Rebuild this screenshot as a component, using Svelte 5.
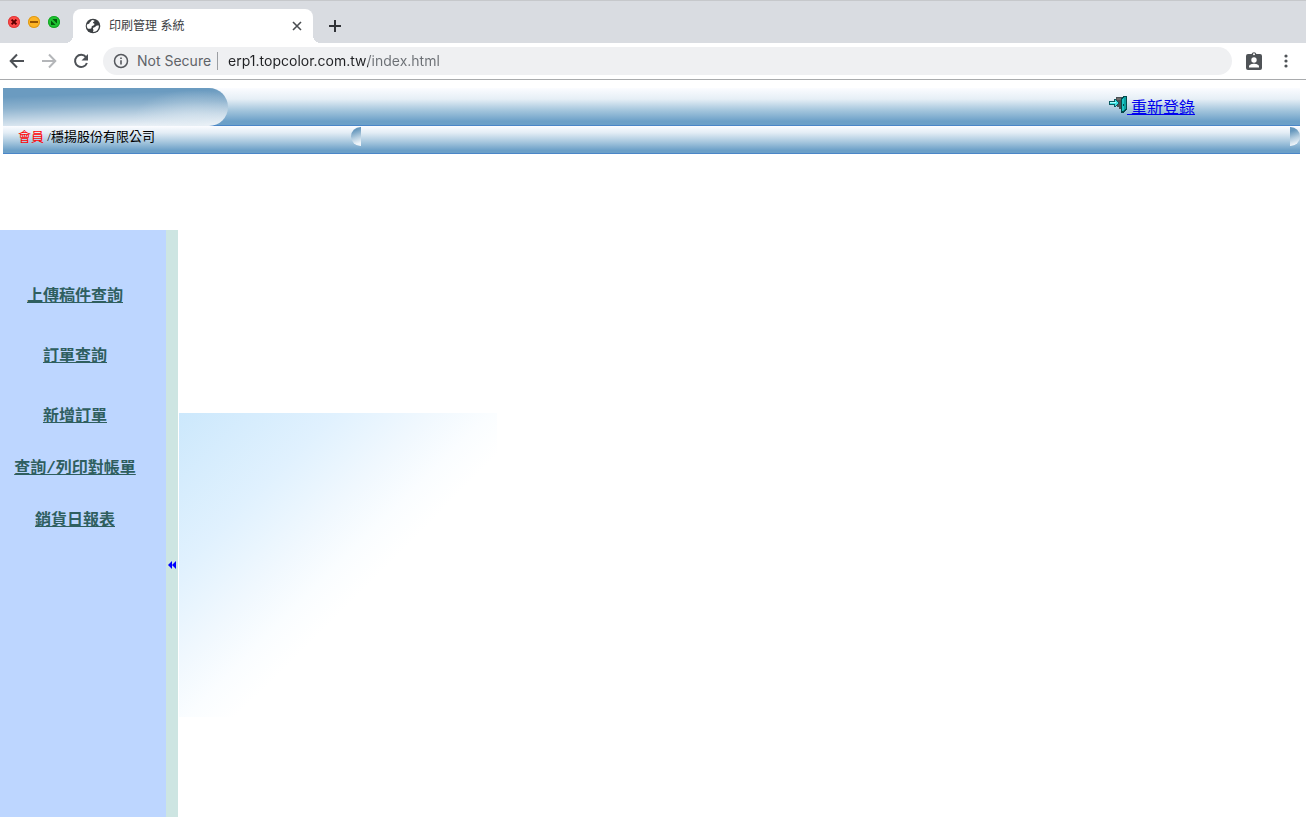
<script>
    let url = $state("erp1.topcolor.com.tw/index.html");

    const menu = [
        { label: "上傳稿件查詢", tall: true },
        { label: "訂單查詢", tall: true },
        { label: "新增訂單", tall: false },
        { label: "查詢/列印對帳單", tall: false },
        { label: "銷貨日報表", tall: false },
    ];
</script>

<div class="window">
    <div class="tabstrip">
        <div class="lights">
            <button class="light red" aria-label="Close window">
                <svg viewBox="0 0 12 12"><path d="M3.6 3.6l4.8 4.8M8.4 3.6L3.6 8.4" stroke="#5c0000" stroke-width="2" /></svg>
            </button>
            <button class="light yellow" aria-label="Minimize window">
                <svg viewBox="0 0 12 12"><path d="M2 6h8" stroke="#8a4a00" stroke-width="1.8" /></svg>
            </button>
            <button class="light green" aria-label="Zoom window">
                <svg viewBox="0 0 12 12"><path d="M3 4.4L7.6 9H3zM4.4 3H9v4.6z" fill="#045a0c" /></svg>
            </button>
        </div>
        <div class="tab">
            <svg class="globe" viewBox="0 0 16 16">
                <circle cx="8" cy="8" r="7.3" fill="#3c4043" />
                <path d="M7.2 1.9c-1.4.4-.9 1.6-2 2-1 .4-.4 1.5-1.4 1.9L2 6.6c-.5 1.5 0 3 .9 4.1 1 .3 2.8.2 3.4-.4.7-.8-.2-1.9.9-2.3 1.5-.4 2.3-.6 2.2-1.9 0-.9-1.4-.5-1.5-1.3 0-1.100 1.500-1 1.600-2.100-.7-.5-1.400-.8-2.300-.8z" fill="#fff" />
                <path d="M13.9 7.6c-1.1-.3-2.7-.3-3.2.7-.5 1.2-1.9.9-2.6 1.8-.5.9.5 1.4.3 2.3-.1.7-.5 1.1-.4 1.6 3.2.2 5.9-2.4 5.9-6.4z" fill="#fff" />
            </svg>
            <span class="title">印刷管理 系統</span>
            <button class="close" aria-label="Close tab">
                <svg viewBox="0 0 10 10"><path d="M1 1l8 8M9 1L1 9" stroke="#4a4d51" stroke-width="1.6" /></svg>
            </button>
        </div>
        <button class="new" aria-label="New tab">
            <svg viewBox="0 0 12 12"><path d="M6 0v12M0 6h12" stroke="#303236" stroke-width="2" /></svg>
        </button>
    </div>

    <div class="toolbar">
        <button class="tool" aria-label="Back">
            <svg viewBox="0 0 16 16"><path d="M15 8H2M8 1.5L1.7 8 8 14.5" fill="none" stroke="#4d5156" stroke-width="2" /></svg>
        </button>
        <button class="tool" aria-label="Forward">
            <svg viewBox="0 0 16 16"><path d="M1 8h13M8 1.5L14.3 8 8 14.5" fill="none" stroke="#b4b6b9" stroke-width="2" /></svg>
        </button>
        <button class="tool" aria-label="Reload">
            <svg viewBox="0 0 16 16">
                <path d="M13 4.2A6.1 6.1 0 1 0 13.9 10" fill="none" stroke="#4d5156" stroke-width="2" />
                <path d="M15 1v6.5H8.5z" fill="#4d5156" />
            </svg>
        </button>
        <div class="omnibox">
            <svg class="info" viewBox="0 0 16 16">
                <circle cx="8" cy="8" r="6.5" fill="none" stroke="#55585d" stroke-width="1.5" />
                <path d="M8 7.200v4.300M8 4.400v1.700" stroke="#55585d" stroke-width="1.6" />
            </svg>
            <label for="url">Not Secure</label>
            <input id="url" type="text" spellcheck="false" bind:value={url} />
        </div>
        <button class="tool profile" aria-label="Profile">
            <svg viewBox="0 0 16 20">
                <path d="M2 3h3.600a2.500 2.500 0 0 1 4.800 0H14q2 0 2 2v12q0 2-2 2H2q-2 0-2-2V5q0-2 2-2z" fill="#4f5357" />
                <circle cx="8" cy="3.2" r="1" fill="#fff" />
                <circle cx="8" cy="9" r="2.7" fill="#fff" />
                <path d="M3 16.500v-1.200c0-1.700 3-2.600 5-2.600s5 .9 5 2.600v1.200z" fill="#fff" />
            </svg>
        </button>
        <button class="tool more" aria-label="Menu">
            <svg viewBox="0 0 4 16">
                <circle cx="2" cy="3" r="1.6" fill="#4f5357" />
                <circle cx="2" cy="8" r="1.6" fill="#4f5357" />
                <circle cx="2" cy="13" r="1.6" fill="#4f5357" />
            </svg>
        </button>
    </div>

    <header>
        <div class="banner">
            <div class="pill"></div>
            <a class="relogin" href="#login">
                <svg viewBox="0 0 18 18" shape-rendering="crispEdges">
                    <path d="M7 2h6v12h-3v-2H8v-2H7z" fill="#4a5054" />
                    <path d="M8 3h4v2H8z" fill="#6d6a66" />
                    <path d="M0 6h5V4h2v1h1v1h1v1h1v2H9v1H8v1H7v1H5v-2H0z" fill="#0a5a60" />
                    <path d="M1 7h5V5h1v1h1v1h1v2H8v1H7v1H6V9H1z" fill="#3fe0e0" />
                    <path d="M1 7h6v1H1z" fill="#a5ffff" />
                    <path d="M12 3h1V2h1V1h4v14h-1v1h-1v1h-1v1h-3z" fill="#044a4c" />
                    <path d="M13 4h1V3h1V2h2v12h-1v1h-1v1h-2z" fill="#0aa3a3" />
                    <path d="M13 4h1V3h1v12h-1v1h-1z" fill="#1cc6c6" />
                    <path d="M14 9h1v2h-1z" fill="#044a4c" />
                </svg>&nbsp;重新登錄</a>
        </div>
        <div class="member">
            <p><span class="role">會員</span> /穩揚股份有限公司</p>
            <div class="marquee">
                <i class="cap left"></i>
                <i class="cap right"></i>
            </div>
        </div>
    </header>

    <div class="frames">
        <nav>
            <ul>
                {#each menu as item}
                    <li class:tall={item.tall}><a href="#menu">{item.label}</a></li>
                {/each}
            </ul>
        </nav>
        <div class="splitter">
            <button aria-label="Collapse menu">
                <svg viewBox="0 0 9 8"><path d="M4 0v8L0 4zM8 0v8L4 4z" fill="#00f" /></svg>
            </button>
        </div>
        <main>
            <div class="backdrop"></div>
        </main>
    </div>
</div>

<style>
    :global(body) {
        background: #fff;
    }
    .window {
        height: 100vh;
        overflow: hidden;
        display: flex;
        flex-direction: column;
        font-family: "Liberation Serif", "Noto Sans CJK TC", serif;
    }
    button {
        display: flex;
        align-items: center;
        justify-content: center;
        padding: 0;
        border: 0;
        background: none;
    }
    svg {
        display: block;
    }

    /* browser chrome */
    .tabstrip {
        display: flex;
        align-items: flex-end;
        height: 43px;
        box-sizing: border-box;
        border-top: 1px solid #c6c8cb;
        background: #d9dce1;
        flex: none;
    }
    .lights {
        display: flex;
        gap: 8px;
        align-self: flex-start;
        padding: 15px 13px 0 8px;
    }
    .light {
        width: 12px;
        height: 12px;
        border-radius: 50%;
    }
    .light svg {
        width: 12px;
        height: 12px;
    }
    .red {
        background: #fc4948;
        box-shadow: inset 0 0 0 1px #de3c3b;
    }
    .yellow {
        background: #fdb424;
        box-shadow: inset 0 0 0 1px #dd9a1c;
    }
    .green {
        background: #1fc432;
        box-shadow: inset 0 0 0 1px #17a527;
    }
    .tab {
        display: flex;
        align-items: center;
        width: 240px;
        height: 34px;
        box-sizing: border-box;
        padding: 0 11px 0 12px;
        border-radius: 8px 8px 0 0;
        background: #fff;
        position: relative;
    }
    .tab::before,
    .tab::after {
        content: "";
        position: absolute;
        bottom: 0;
        width: 8px;
        height: 8px;
    }
    .tab::before {
        left: -8px;
        background: radial-gradient(circle at 0 0, transparent 8px, #fff 8px);
    }
    .tab::after {
        right: -8px;
        background: radial-gradient(circle at 100% 0, transparent 8px, #fff 8px);
    }
    .globe {
        width: 16px;
        height: 16px;
    }
    .title {
        flex: 1;
        padding-left: 8px;
        font: 12px/16px Inter, "Noto Sans CJK TC", sans-serif;
        color: #3c4043;
    }
    .close svg {
        width: 10px;
        height: 10px;
    }
    .new {
        width: 28px;
        height: 34px;
        margin-left: 8px;
    }
    .new svg {
        width: 12px;
        height: 12px;
    }
    .toolbar {
        display: flex;
        align-items: center;
        flex: none;
        height: 36px;
        padding: 0 4px 0 1px;
        border-bottom: 1px solid #a9abad;
    }
    .tool {
        width: 32px;
        height: 28px;
    }
    .tool svg {
        width: 16px;
        height: 16px;
    }
    .omnibox {
        display: flex;
        flex: 1;
        align-items: center;
        height: 28px;
        margin-left: 6px;
        padding-left: 10px;
        border-radius: 14px;
        background: #eff0f2;
        font: 14px/18px Inter, sans-serif;
        color: #5f6368;
    }
    .info {
        width: 16px;
        height: 16px;
        margin-right: 8px;
    }
    label {
        padding-right: 6px;
        border-right: 1px solid #9b9ea2;
    }
    /* host name is darker than the path after it */
    input {
        flex: 1;
        padding: 0 0 0 10px;
        border: 0;
        outline: 0;
        font: inherit;
        color: transparent;
        caret-color: #202124;
        background: linear-gradient(90deg, #202124 150px, #6b6f74 150px);
        background-clip: text;
        -webkit-background-clip: text;
    }
    .profile {
        margin-left: 6px;
    }
    .profile svg {
        width: 16px;
        height: 20px;
    }
    .more svg {
        width: 4px;
    }

    /* page header */
    header {
        flex: none;
        margin: 8px 6px 0 3px;
    }
    .banner,
    .member {
        display: flex;
        border-bottom: 1px solid #4a86c8;
    }
    .banner {
        justify-content: space-between;
        height: 37px;
        background: linear-gradient(#fbfcff, #e6eff6 30%, #a5c6dd 60%, #6ca0c8 90%, #6ca0c8);
    }
    .pill {
        width: 225px;
        height: 38px;
        border-radius: 0 19px 19px 0;
        background:
            radial-gradient(ellipse 60px 30px at 190px 32px, #dce8f180, transparent),
            linear-gradient(178deg, #6b9bc0 20%, #8db2ce 45%, #c4d7e6 72%, #eef3f8 95%);
    }
    .relogin {
        margin: 7px 105px 0 0;
        font-size: 16px;
        line-height: 24px;
        color: #00e;
    }
    .relogin svg {
        display: inline-block;
        width: 18px;
        height: 18px;
        vertical-align: baseline;
    }
    .member {
        height: 27px;
        background: linear-gradient(#fbfcff, #e3edf5 25%, #a5c6dd 60%, #6ca0c8 90%, #6ca0c8);
    }
    .member p {
        width: 333px;
        margin: 0;
        padding-left: 15px;
        font-size: 13px;
        line-height: 22px;
        color: #000;
    }
    .role {
        color: #f00;
    }
    .marquee {
        display: flex;
        flex: 1;
        justify-content: space-between;
    }
    .cap {
        width: 10px;
        height: 19px;
        margin-top: 1px;
        background: linear-gradient(160deg, #6798bd 20%, #b5cee0 55%, #eef4f9 85%);
    }
    .left {
        border-radius: 10px 0 0 10px;
    }
    .right {
        border-radius: 0 10px 10px 0;
    }

    /* frameset */
    .frames {
        display: flex;
        flex: 1;
        margin-top: 76px;
    }
    nav {
        width: 166px;
        background: #bdd6ff;
    }
    ul {
        width: 150px;
        margin: 0;
        padding: 55px 0 0;
        list-style: none;
        text-align: center;
    }
    li {
        margin-bottom: 28px;
        font: bold 16px/24px "Liberation Mono", "Noto Sans CJK TC", monospace;
        white-space: nowrap;
    }
    .tall {
        margin-bottom: 36px;
    }
    li a {
        color: #2f5f5f;
    }
    .splitter {
        width: 12px;
        background: #cde5e2;
    }
    .splitter button {
        width: 12px;
        margin-top: 331px;
    }
    .splitter svg {
        width: 9px;
        height: 8px;
    }
    main {
        flex: 1;
        padding: 183px 0 0 1px;
    }
    .backdrop {
        width: 318px;
        height: 304px;
        background: linear-gradient(135deg, #cce8fc, #e0f1fe 25%, #f0f8fe 40%, #fafdff 50%, #fff 58%);
    }
</style>
